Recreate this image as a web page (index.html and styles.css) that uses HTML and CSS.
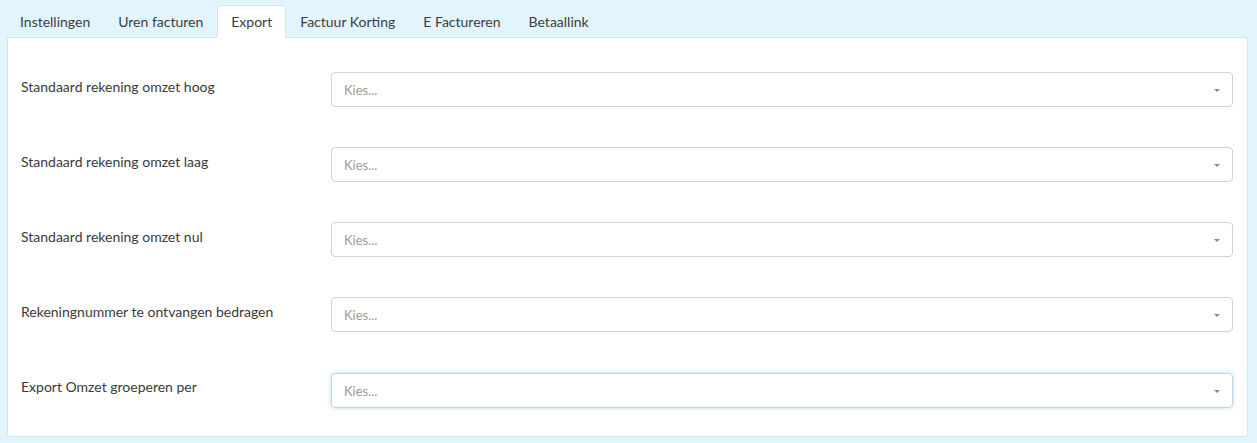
FILE: index.html
```html
<!DOCTYPE html>
<html lang="nl">
<head>
    <meta charset="UTF-8" />
    <meta name="viewport" content="width=device-width, initial-scale=1.0" />
    <title>Instellingen</title>
    <link rel="stylesheet" href="styles.css">
</head>
<body>
    <ul class="tabs">
        <li><a href="#">Instellingen</a></li>
        <li><a href="#">Uren facturen</a></li>
        <li class="active"><a href="#">Export</a></li>
        <li><a href="#">Factuur Korting</a></li>
        <li><a href="#">E Factureren</a></li>
        <li><a href="#">Betaallink</a></li>
    </ul>
    <div class="panel">
        <div class="form-row">
            <label>Standaard rekening omzet hoog</label>
            <div class="select"><span>Kies...</span><i class="caret"></i></div>
        </div>
        <div class="form-row">
            <label>Standaard rekening omzet laag</label>
            <div class="select"><span>Kies...</span><i class="caret"></i></div>
        </div>
        <div class="form-row">
            <label>Standaard rekening omzet nul</label>
            <div class="select"><span>Kies...</span><i class="caret"></i></div>
        </div>
        <div class="form-row">
            <label>Rekeningnummer te ontvangen bedragen</label>
            <div class="select"><span>Kies...</span><i class="caret"></i></div>
        </div>
        <div class="form-row">
            <label>Export Omzet groeperen per</label>
            <div class="select focus"><span>Kies...</span><i class="caret"></i></div>
        </div>
    </div>
</body>
</html>
```

FILE: styles.css
```css
body {
    font-family: 'Lato', 'Open Sans', sans-serif;
    font-size: 14px;
    margin: 0;
    padding: 5px 9px 0 7px;
    background-color: #e2f4fd;
    color: #3a3a3a;
}

.tabs {
    display: flex;
    list-style-type: none;
    margin: 0;
    padding: 0;
}

.tabs li {
    margin-bottom: -1px;
}

.tabs a {
    display: block;
    height: 33px;
    line-height: 32px;
    padding: 0 13px;
    color: #3d3d3d;
    text-decoration: none;
    border: 1px solid transparent;
    border-radius: 4px 4px 0 0;
    box-sizing: border-box;
}

.tabs li:first-child a {
    margin-left: -1px;
}

.tabs .active a {
    background-color: #ffffff;
    border-color: #d6e4ec;
    border-bottom-color: #ffffff;
}

.panel {
    background-color: #ffffff;
    border: 1px solid #d6e4ec;
    border-radius: 0 0 3px 3px;
    padding: 34px 14px 28px 13px;
}

.form-row {
    display: flex;
    align-items: flex-start;
    margin-bottom: 40px;
}

.form-row:last-child {
    margin-bottom: 0;
}

.form-row:last-child .select {
    margin-top: 1px;
}

.form-row label {
    width: 310px;
    flex-shrink: 0;
    padding-top: 6px;
    line-height: 17px;
}

.select {
    flex: 1;
    height: 35px;
    box-sizing: border-box;
    border: 1px solid #cfd3d8;
    border-radius: 4px;
    display: flex;
    align-items: center;
    justify-content: space-between;
    padding: 0 12px;
    font-size: 13px;
    color: #a49a93;
}

.select.focus {
    border-color: #c2d3e6;
    box-shadow: 0 0 4px rgba(102, 175, 233, 0.45);
}

.caret {
    width: 0;
    height: 0;
    border-left: 3px solid transparent;
    border-right: 3px solid transparent;
    border-top: 3px solid #8a8a8a;
    margin-top: 1px;
}
```
